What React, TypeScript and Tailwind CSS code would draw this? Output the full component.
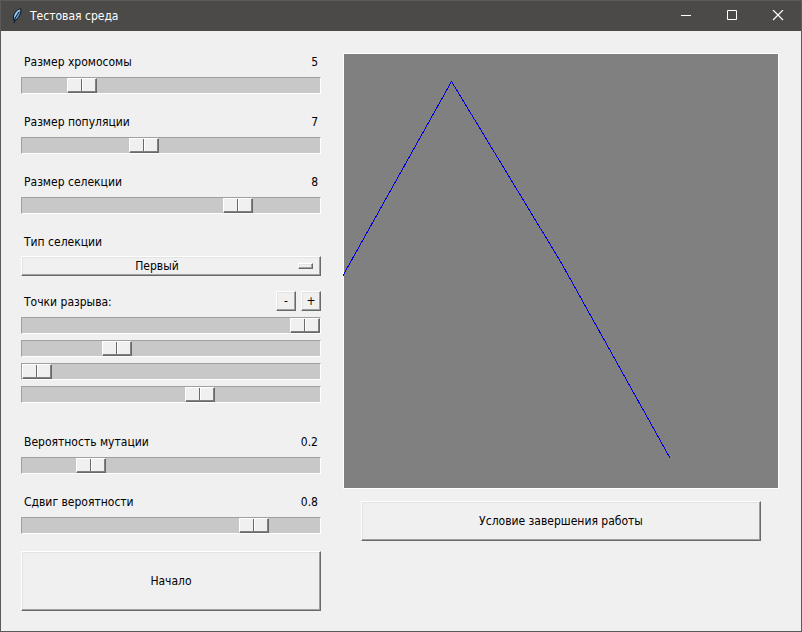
import { useState } from 'react';
import type { ReactNode } from 'react';

const RAISED =
  'border border-t-white border-l-white border-r-[#696969] border-b-[#696969] bg-[#f0f0f0] shadow-[inset_-1px_-1px_0_#a0a0a0,inset_1px_1px_0_#e3e3e3]';

const SLIDER =
  'block h-[17px] w-full appearance-none border border-t-[#a0a0a0] border-l-[#a0a0a0] border-r-white border-b-white bg-[#c8c8c8] outline-none ' +
  '[&::-webkit-slider-thumb]:h-[15px] [&::-webkit-slider-thumb]:w-[30px] [&::-webkit-slider-thumb]:appearance-none ' +
  '[&::-webkit-slider-thumb]:border [&::-webkit-slider-thumb]:border-t-white [&::-webkit-slider-thumb]:border-l-white [&::-webkit-slider-thumb]:border-r-[#696969] [&::-webkit-slider-thumb]:border-b-[#696969] ' +
  '[&::-webkit-slider-thumb]:bg-[linear-gradient(to_right,#f0f0f0_13px,#696969_13px,#696969_14px,#ffffff_14px,#ffffff_15px,#f0f0f0_15px)] ' +
  '[&::-webkit-slider-thumb]:shadow-[inset_-1px_-1px_0_#808080]';

type SliderProps = {
  id: string;
  label: string;
  min: number;
  max: number;
  step: number;
  initial: number;
  digits?: number;
};

function LabeledSlider({ id, label, min, max, step, initial, digits = 0 }: SliderProps) {
  const [value, setValue] = useState(initial);
  return (
    <div className="flex flex-col gap-1">
      <div className="flex h-[22px] items-center justify-between px-[3px]">
        <label htmlFor={id}>{label}</label>
        <output htmlFor={id}>{value.toFixed(digits)}</output>
      </div>
      <input
        id={id}
        type="range"
        min={min}
        max={max}
        step={step}
        value={value}
        onChange={(e) => setValue(Number(e.target.value))}
        className={SLIDER}
      />
    </div>
  );
}

function BreakPoints() {
  const [points, setPoints] = useState([1, 0.3, 0, 0.61]);
  const small = `${RAISED} flex size-5 items-center justify-center leading-4`;
  return (
    <fieldset className="mt-[15px] flex min-w-0 flex-col gap-[6px]">
      <div className="flex h-5 items-start gap-[5px] pl-[3px]">
        <span id="points-label" className="flex-1 leading-[22px]">Точки разрыва:</span>
        <button type="button" className={small} onClick={() => setPoints(points.slice(0, -1))}>
          -
        </button>
        <button type="button" className={small} onClick={() => setPoints([...points, 0])}>
          +
        </button>
      </div>
      {points.map((p, i) => (
        <input
          key={i}
          type="range"
          aria-labelledby="points-label"
          min={0}
          max={1}
          step={0.01}
          value={p}
          onChange={(e) => setPoints(points.map((q, j) => (j === i ? Number(e.target.value) : q)))}
          className={SLIDER}
        />
      ))}
    </fieldset>
  );
}

function CaptionButton({ label, children }: { label: string; children: ReactNode }) {
  return (
    <button type="button" aria-label={label} className="flex h-full w-[46px] items-center justify-center">
      <svg width="12" height="12" viewBox="0 0 12 12" fill="none" stroke="#ffffff" aria-hidden="true">
        {children}
      </svg>
    </button>
  );
}

function Feather() {
  return (
    <svg width="11" height="16" viewBox="0 0 11 16" aria-hidden="true">
      <path d="M9.800 .8C6.500 1 3.300 4.500 2.600 8c-.3 1.400-.3 3 .2 4.200l1.400.3C6.800 11 8.800 8 9.600 5c.4-1.500.4-3 .2-4.200Z" fill="#5b93cc" stroke="#101319" strokeWidth="1" />
      <path d="M9 1.600C6.500 2.600 4.200 5.200 3.400 8.300L3.400 10.500 8 3.500Z" fill="#a5d2f7" />
      <path d="M7.800 4 4.200 10 3 15" fill="none" stroke="#101319" strokeWidth="1" />
    </svg>
  );
}

export default function App() {
  return (
    <div className="flex min-h-screen flex-col border border-[#5a5a5a] bg-[#f0f0f0] font-['DejaVu_Sans_Condensed','Open_Sans',sans-serif] text-xs text-black">
      <header className="flex h-[30px] items-center bg-[#4b4a48] pl-[10px] text-white">
        <Feather />
        <h1 className="flex-1 pl-2">Тестовая среда</h1>
        <CaptionButton label="Свернуть">
          <path d="M1 5.500H11" />
        </CaptionButton>
        <CaptionButton label="Развернуть">
          <path d="M1.500 .5H10.500V9.500H1.500Z" />
        </CaptionButton>
        <CaptionButton label="Закрыть">
          <path d="M1 0 11 10M11 0 1 10" strokeWidth="1.200" />
        </CaptionButton>
      </header>
      <main className="flex flex-1 gap-[22px] pt-5 pr-[22px] pb-5 pl-5">
        <form className="w-[300px] shrink-0" onSubmit={(e) => e.preventDefault()}>
          <div className="flex flex-col gap-[17px]">
            <LabeledSlider id="chromosome" label="Размер хромосомы" min={2} max={20} step={1} initial={5} />
            <LabeledSlider id="population" label="Размер популяции" min={3} max={13} step={1} initial={7} />
            <LabeledSlider id="selection" label="Размер селекции" min={2} max={10} step={1} initial={8} />
            <div className="flex flex-col gap-[3px]">
              <label htmlFor="kind" className="flex h-[22px] items-center px-[3px]">
                Тип селекции
              </label>
              <div className="relative">
                <select
                  id="kind"
                  className={`${RAISED} block h-5 w-full appearance-none rounded-none pr-7 text-center leading-4 outline-none [text-align-last:center]`}
                >
                  <option>Первый</option>
                  <option>Второй</option>
                </select>
                <span className={`${RAISED} pointer-events-none absolute top-[7px] right-2 h-[6px] w-[15px]`} />
              </div>
            </div>
          </div>
          <BreakPoints />
          <div className="mt-7 flex flex-col gap-[17px]">
            <LabeledSlider id="mutation" label="Вероятность мутации" min={0} max={1} step={0.01} initial={0.2} digits={1} />
            <LabeledSlider id="shift" label="Сдвиг вероятности" min={0} max={1} step={0.01} initial={0.81} digits={1} />
            <button type="submit" className={`${RAISED} h-[60px] w-full`}>
              Начало
            </button>
          </div>
        </form>
        <section className="flex min-w-0 flex-1 flex-col items-center gap-3 pt-[2px]">
          <svg
            viewBox="0 0 436 436"
            className="block w-full"
            shapeRendering="crispEdges"
            role="img"
            aria-label="График"
          >
            <rect width="436" height="436" fill="#ffffff" />
            <rect x="1" y="1" width="434" height="434" fill="#808080" />
            <polyline points="0,222.500 108.500,28.500 217.500,208.500 327,405" fill="none" stroke="#0000e0" />
          </svg>
          <button type="button" className={`${RAISED} h-10 w-[400px] max-w-full`}>
            Условие завершения работы
          </button>
        </section>
      </main>
    </div>
  );
}
